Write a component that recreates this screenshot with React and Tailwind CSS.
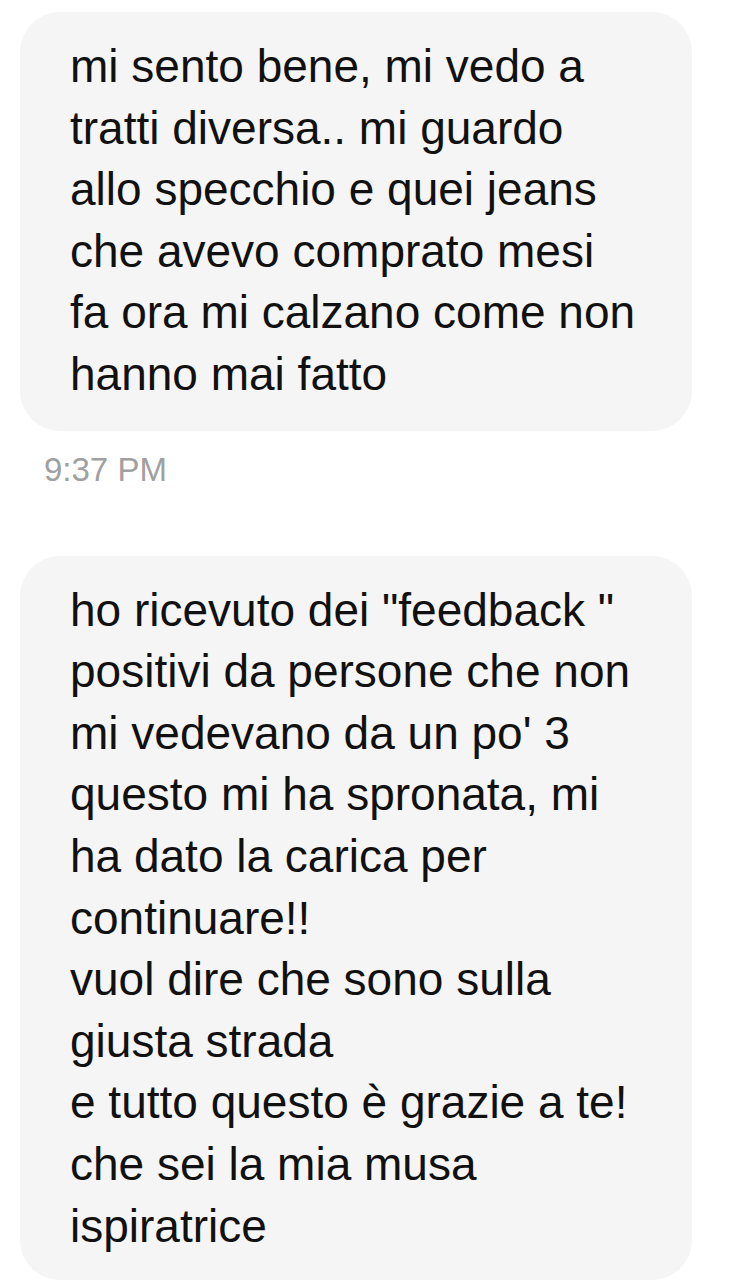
export default function App() {
  const font = { fontFamily: '"Liberation Sans", Arial, Helvetica, sans-serif' };
  return (
    <div className="w-[744px] h-[1280px] bg-white overflow-hidden" style={font}>
      <div className="pt-[12px] pl-[20px] flex flex-col">
        <div className="w-[672px] bg-[#f5f5f5] rounded-[40px] pl-[50px] pr-[20px] pt-[24px] pb-[25px] text-[46px] leading-[61.6px] text-[#111111]">
          mi sento bene, mi vedo a<br />
          tratti diversa.. mi guardo<br />
          allo specchio e quei jeans<br />
          che avevo comprato mesi<br />
          fa ora mi calzano come non<br />
          hanno mai fatto
        </div>
        <div className="mt-[19px] pl-[24px] text-[33px] leading-[40px] text-[#a0a0a0]">9:37 PM</div>
        <div className="mt-[66px] w-[672px] bg-[#f5f5f5] rounded-[40px] pl-[50px] pr-[20px] pt-[24px] pb-[23px] text-[46px] leading-[61.6px] text-[#111111]">
          ho ricevuto dei "feedback "<br />
          positivi da persone che non<br />
          mi vedevano da un po' 3<br />
          questo mi ha spronata, mi<br />
          ha dato la carica per<br />
          continuare!!<br />
          vuol dire che sono sulla<br />
          giusta strada<br />
          e tutto questo è grazie a te!<br />
          che sei la mia musa<br />
          ispiratrice
        </div>
      </div>
    </div>
  );
}
